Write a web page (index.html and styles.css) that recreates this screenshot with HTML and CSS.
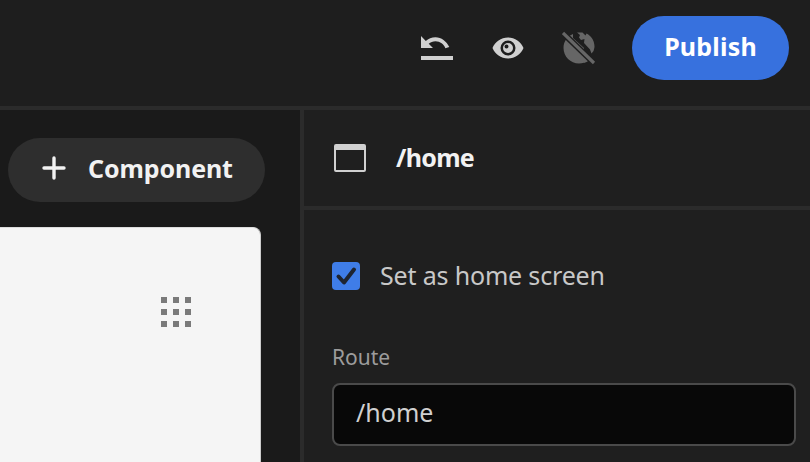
FILE: index.html
```html
<!DOCTYPE html>
<html lang="en">
<head>
<meta charset="utf-8">
<title>Publish</title>
<link rel="stylesheet" href="styles.css">
</head>
<body>
<div class="app">
  <header class="topbar">
    <svg class="icon undo" viewBox="0 0 34 26" width="34" height="26"><path fill="#d0d0d0" d="M1 1v12h12l-4.300-4.300c1.800-1.600 4.200-2.500 6.800-2.500 4.600 0 8.500 3 9.900 7.100l3.900-1.300C26.400 6.500 21.400 2.300 15.500 2.300c-3.800 0-7.200 1.400-9.700 3.800z"/><rect fill="#d0d0d0" x="1" y="21" width="32" height="4"/></svg>
    <svg class="icon eye" viewBox="0 0 32 22" width="32" height="22"><path fill="#d0d0d0" fill-rule="evenodd" d="M16 .5C9 .5 3 4.800.500 11 3 17.200 9 21.500 16 21.500S29 17.200 31.500 11C29 4.800 23 .5 16 .5zM16 18.500a7.500 7.500 0 1 1 0-15 7.500 7.500 0 0 1 0 15z"/><path fill="#d0d0d0" fill-rule="evenodd" d="M16 6a5 5 0 1 0 0 10 5 5 0 0 0 0-10zM14.500 7.500a2 2 0 1 1 0 4 2 2 0 0 1 0-4z"/></svg>
    <svg class="icon globe" viewBox="0 0 34 34" width="34" height="34"><path fill="#666" d="M11 3C5.500 5 1.500 10.500 1.500 17c0 8.500 7 15.500 15.500 15.500 1.700 0 3.400-.3 5-.8V17L11 7z"/><path fill="#666" d="M15 1.500l3 2.500-1 2.500 2 2.500 3.500-1L22 12l6 6.500 1.500 4 2-2.500c.7-1.900 1-3.900 1-4.500 0-6.500-4-11-8-13l-1 2-3-3zM22 24l5 5.500c-1.500 1.200-3.200 2-5 2.500z"/><path fill="none" stroke="#1e1e1e" stroke-width="6" d="M3 4l28 27"/><path stroke="#666" stroke-width="3.200" d="M1 2l31 30"/></svg>
    <button class="publish">Publish</button>
  </header>
  <div class="main">
    <aside class="left">
      <button class="add">
        <svg class="plus" viewBox="0 0 24 24" width="24" height="24"><path stroke="#f2f2f2" stroke-width="3.400" stroke-linecap="round" d="M12 2v20M2 12h20"/></svg>
        <span>Component</span>
      </button>
      <div class="card">
        <div class="grip"><i></i><i></i><i></i><i></i><i></i><i></i><i></i><i></i><i></i></div>
      </div>
    </aside>
    <section class="right">
      <div class="page-head">
        <svg class="page-icon" viewBox="0 0 32 28" width="32" height="28"><rect x="1" y="1" width="30" height="26" rx="1" fill="none" stroke="#d0d0d0" stroke-width="2"/><rect x="1" y="1" width="30" height="5" fill="#d0d0d0"/></svg>
        <span class="page-name">/home</span>
      </div>
      <div class="props">
        <label class="check">
          <span class="box"><svg viewBox="0 0 28 28" width="28" height="28"><path fill="none" stroke="#1e2430" stroke-width="4" stroke-linecap="round" stroke-linejoin="round" d="M6.500 14.500l5.500 6L22 7.500"/></svg></span>
          <span class="check-text">Set as home screen</span>
        </label>
        <div class="field-label">Route</div>
        <div class="input">/home</div>
      </div>
    </section>
  </div>
</div>
</body>
</html>
```

FILE: styles.css
```css
* { box-sizing: border-box; }
html, body { margin: 0; padding: 0; }
body { width: 810px; height: 462px; overflow: hidden; font-family: "Noto Sans", "Open Sans", sans-serif; background: #1e1e1e; }
.app { display: flex; flex-direction: column; height: 462px; }
.topbar { height: 110px; flex: none; display: flex; align-items: flex-start; padding: 16px 21px 0 0; background: #1e1e1e; border-bottom: 4px solid #2b2b2b; justify-content: flex-end; }
.icon { flex: none; display: block; }
.undo { margin-top: 19px; margin-right: 38px; }
.eye { margin-top: 21px; margin-right: 38px; }
.globe { margin-top: 15px; margin-right: 36px; }
.publish { width: 157px; height: 64px; border: 0; border-radius: 32px; background: #3771de; color: #fff; font: 700 25px/60px "Noto Sans", sans-serif; letter-spacing: 0.2px; padding: 0 0 4px; }
.main { flex: 1; display: flex; min-height: 0; }
.left { width: 304px; flex: none; background: #1a1a1a; border-right: 4px solid #2b2b2b; padding: 28px 0 0 8px; overflow: hidden; }
.add { display: flex; align-items: center; width: 257px; height: 64px; border: 0; border-radius: 32px; background: #2e2e2e; color: #f2f2f2; font: 700 25px/60px "Noto Sans", sans-serif; letter-spacing: -0.1px; padding: 0 0 4px 34px; }
.plus { margin-right: 22px; flex: none; }
.add span { white-space: nowrap; }
.card { width: 261px; height: 300px; margin: 25px 0 0 -8px; background: #f5f5f5; border-radius: 0 8px 0 0; border-top: 1px solid #ddd; border-right: 1px solid #ccc; padding: 69px 0 0 161px; }
.grip { display: grid; grid-template-columns: repeat(3, 6px); grid-auto-rows: 6px; gap: 6px; }
.grip i { background: #7a7a7a; display: block; }
.right { flex: 1; background: #1f1f1f; min-width: 0; }
.page-head { height: 100px; border-bottom: 4px solid #2b2b2b; display: flex; align-items: center; padding-left: 30px; color: #f2f2f2; font-size: 25px; font-weight: 700; letter-spacing: -0.7px; }
.page-name { padding-bottom: 3px; }
.page-icon { margin-right: 30px; flex: none; }
.props { padding: 49px 14px 0 28px; }
.check { display: flex; align-items: center; color: #c8c8c8; font-size: 25px; height: 34px; letter-spacing: -0.17px; }
.check-text { padding-bottom: 2px; }
.box { width: 28px; height: 28px; border-radius: 4px; background: #3f7de8; margin-right: 20px; flex: none; display: block; }
.box svg { display: block; }
.field-label { margin-top: 50px; color: #9c9c9c; font-size: 21px; line-height: 28px; }
.input { margin-top: 12px; height: 63px; border: 2px solid #4a4a4a; border-radius: 8px; background: #080808; color: #d0d0d0; font-size: 25px; line-height: 54px; padding-left: 22px; }
```
